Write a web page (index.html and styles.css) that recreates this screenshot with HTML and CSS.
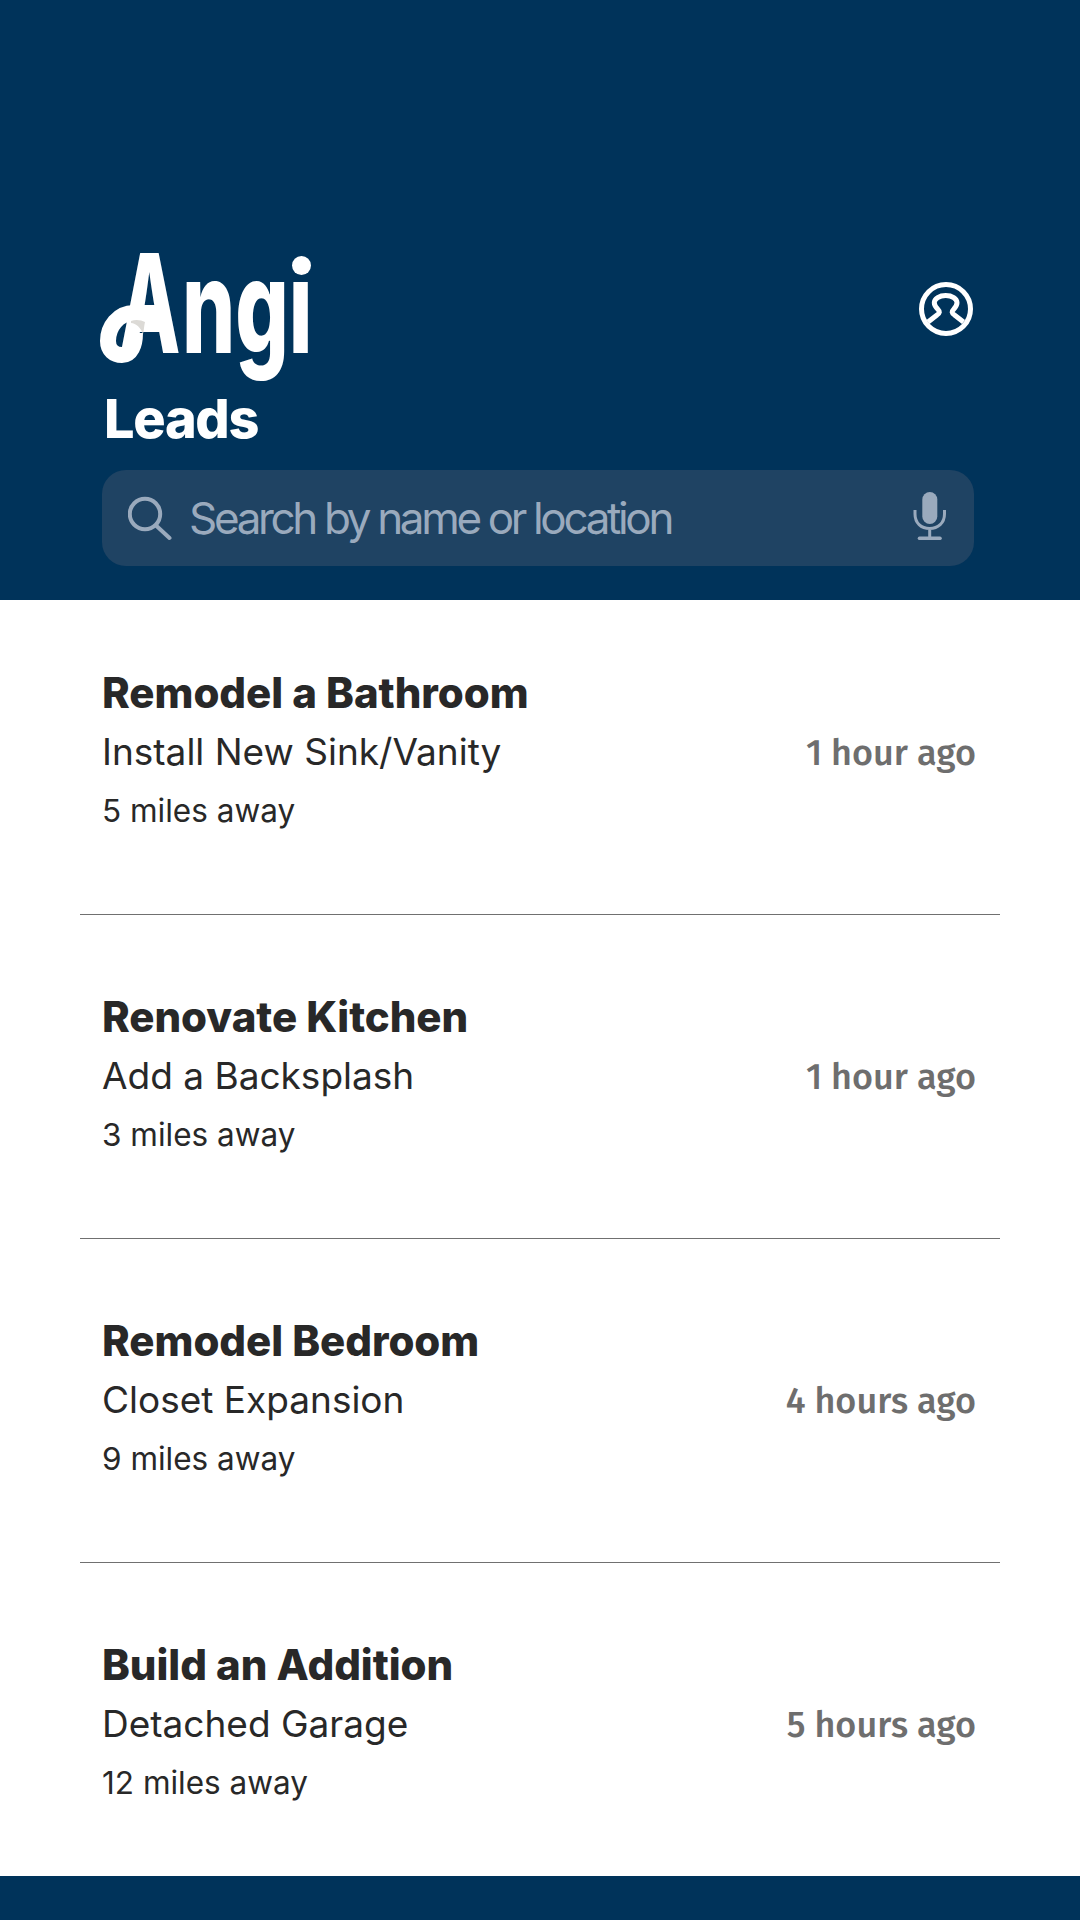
FILE: index.html
```html
<!DOCTYPE html>
<html lang="en">
<head>
<meta charset="utf-8">
<title>Angi Leads</title>
<link rel="stylesheet" href="styles.css">
</head>
<body>
<div class="app">
  <header class="header">
    <div class="brand-row">
      <svg class="logo" viewBox="100 251 214 126" aria-label="Angi">
        <defs>
          <clipPath id="no-dot"><rect x="100" y="279" width="214" height="104"/></clipPath>
        </defs>
        <text class="logo-text" transform="translate(119 353) scale(0.58 1)">A</text>
        <g clip-path="url(#no-dot)">
          <text class="logo-text logo-rest" transform="translate(182 353) scale(0.645 1)">ngi</text>
        </g>
        <circle class="logo-dot" cx="301.500" cy="265.500" r="9.500"/>
        <path class="logo-loop" d="M158 313H134C118 313 108 327 108 341C108 350 114 355 122 355C131 355 135 345 135 333"/>
        <path class="logo-fold" d="M131 321C136 319 141 320 145 322C144 326 144 330 143 334C141 328 136 323 131 323Z"/>
      </svg>
      <svg class="avatar" viewBox="0 0 54 54">
        <circle class="avatar-ring" cx="27" cy="27" r="24.500"/>
        <path class="avatar-person" d="M9 40L18 33C21 31 21 29.500 19 27.500C16.500 25 15.300 23.500 15.300 20.800C15.300 16.500 20.500 13.500 26.700 13.500C33 13.500 38 16.500 38 20.800C38 23.500 36.800 25 34.500 27.500C32.500 29.500 32.500 31 35.500 33L44.500 40"/>
      </svg>
    </div>
    <h1 class="title">Leads</h1>
    <div class="search">
      <svg class="search-icon" viewBox="0 0 44 46">
        <circle cx="17" cy="19" r="15.200"/>
        <path d="M28 30.500L41.500 43"/>
      </svg>
      <span class="placeholder">Search by name or location</span>
      <svg class="mic" viewBox="0 0 33 48">
        <rect class="mic-body" x="9.300" y="0" width="15" height="32" rx="7.500"/>
        <path class="mic-arms" d="M2 18V22C2 31 8 36.500 16.700 36.500C25 36.500 31.500 31 31.500 22V18M16.700 36.500V45"/>
        <path class="mic-base" d="M6.500 46.300H27"/>
      </svg>
    </div>
  </header>
  <main class="list">
    <article class="lead">
      <div class="info"><h2 class="job">Remodel a Bathroom</h2><p class="task">Install New Sink/Vanity</p><p class="dist">5 miles away</p></div>
      <span class="time">1 hour ago</span>
    </article>
    <article class="lead">
      <div class="info"><h2 class="job">Renovate Kitchen</h2><p class="task">Add a Backsplash</p><p class="dist">3 miles away</p></div>
      <span class="time">1 hour ago</span>
    </article>
    <article class="lead">
      <div class="info"><h2 class="job">Remodel Bedroom</h2><p class="task">Closet Expansion</p><p class="dist">9 miles away</p></div>
      <span class="time">4 hours ago</span>
    </article>
    <article class="lead">
      <div class="info"><h2 class="job">Build an Addition</h2><p class="task">Detached Garage</p><p class="dist">12 miles away</p></div>
      <span class="time">5 hours ago</span>
    </article>
  </main>
  <footer class="footer"></footer>
</div>
</body>
</html>
```
FILE: styles.css
```css
* { box-sizing: border-box; }
html, body { margin: 0; padding: 0; background: #fff; }
.app { width: 1080px; height: 1920px; display: flex; flex-direction: column; font-family: Inter, sans-serif; color: #282828; overflow: hidden; }
.header { flex: none; height: 600px; background: #00335a; padding: 251px 107px 0 102px; }
.brand-row { display: flex; justify-content: space-between; align-items: flex-start; height: 126px; }
.logo { width: 214px; height: 126px; margin-left: -2px; overflow: visible; }
.logo-text { font-family: Inter, sans-serif; font-weight: 800; font-size: 137.500px; fill: #fff; }
.logo-rest { font-size: 130px; }
.logo-dot { fill: #fff; }
.logo-loop { fill: none; stroke: #fff; stroke-width: 16px; }
.logo-fold { fill: #dcdad6; }
.avatar { width: 54px; height: 54px; margin-top: 31px; }
.avatar-ring, .avatar-person { fill: none; stroke: #fff; stroke-width: 5px; }
.title { margin: 11px 0 0 2px; font-size: 54px; line-height: 62px; font-weight: 800; letter-spacing: -1.300px; color: #fff; }
.search { display: flex; align-items: center; height: 96px; margin: 20px 0 0; width: 872px; background: #1f4363; border-radius: 24px; padding: 0 28px 0 26px; }
.search-icon { width: 44px; height: 46px; flex: none; fill: none; stroke: #9aaabd; stroke-width: 4px; stroke-linecap: round; }
.placeholder { flex: 1; margin-left: 17px; font-size: 44px; letter-spacing: -3.340px; color: #9aaabd; }
.mic { width: 33px; height: 48px; flex: none; margin-top: -5px; }
.mic-body { fill: #9aaabd; }
.mic-arms { fill: none; stroke: #9aaabd; stroke-width: 3px; }
.mic-base { fill: none; stroke: #9aaabd; stroke-width: 3.500px; stroke-linecap: round; }
.list { flex: 1; padding: 0 80px; display: flex; flex-direction: column; }
.lead { flex: none; border-bottom: 1px solid #707070; display: flex; align-items: center; justify-content: space-between; padding: 73px 24px 74px 22px; }
.lead:first-child { padding-top: 64px; }
.lead:last-child { border-bottom: 0; padding-bottom: 64px; }
.job { margin: 0; font-size: 42px; line-height: 58px; font-weight: 800; letter-spacing: -0.050px; }
.task { margin: 0; font-size: 37px; line-height: 59px; font-weight: 400; }
.dist { margin: 0; font-size: 31.500px; line-height: 59px; }
.time { margin-top: 2px; font-family: "Fira Sans", "Open Sans", sans-serif; font-size: 36px; font-weight: 500; color: #6e6e6e; }
.footer { height: 44px; background: #00335a; flex: none; }
```
